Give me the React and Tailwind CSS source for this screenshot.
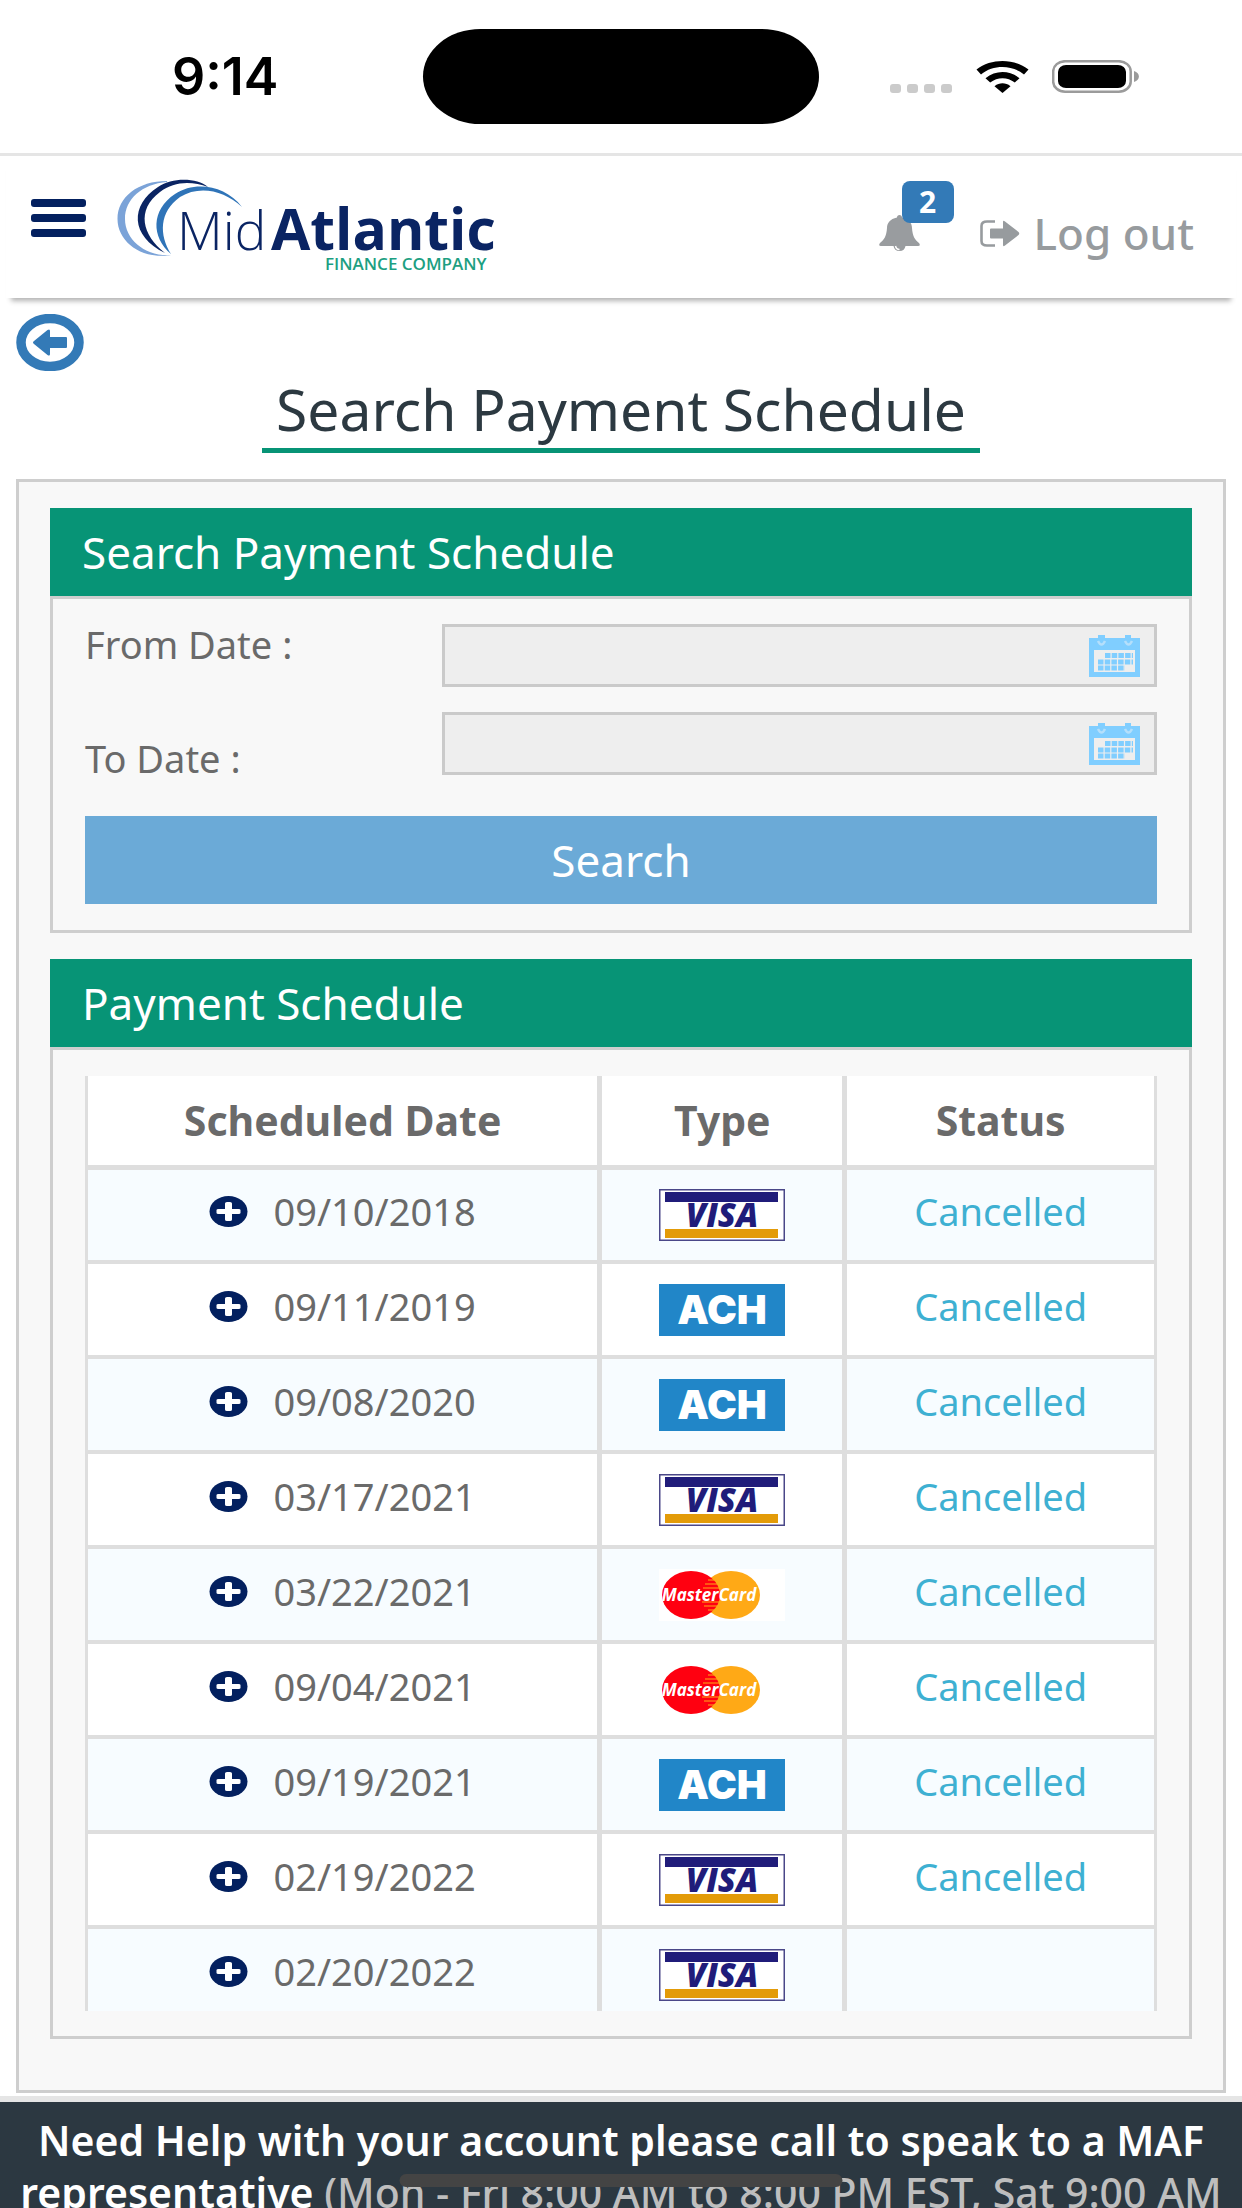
import React, { useState } from 'react';

const payments = [
  { date: '09/10/2018', type: 'visa', status: 'Cancelled' },
  { date: '09/11/2019', type: 'ach', status: 'Cancelled' },
  { date: '09/08/2020', type: 'ach', status: 'Cancelled' },
  { date: '03/17/2021', type: 'visa', status: 'Cancelled' },
  { date: '03/22/2021', type: 'mastercard', status: 'Cancelled' },
  { date: '09/04/2021', type: 'mastercard', status: 'Cancelled' },
  { date: '09/19/2021', type: 'ach', status: 'Cancelled' },
  { date: '02/19/2022', type: 'visa', status: 'Cancelled' },
  { date: '02/20/2022', type: 'visa', status: '' },
];

const StatusBar = () => (
  <div className="relative flex h-[156px] shrink-0 items-center justify-between border-b-3 border-[#e5e5e5] pt-1 pb-1 pl-[172px] pr-[103px]">
    <span className="font-['Inter'] text-[52px] leading-none font-semibold text-black">9:14</span>
    <div className="absolute top-[29px] left-1/2 h-[95px] w-[396px] -translate-x-1/2 rounded-[58px/48px] bg-black" />
    <div className="flex items-center">
      <div className="mt-6 flex gap-[6px]">
        {[0, 1, 2, 3].map((dot) => (
          <span key={dot} className="h-[9px] w-[11px] rounded-[3px] bg-[#cbcbcb]" />
        ))}
      </div>
      <svg className="ml-6 h-8 w-[53px]" viewBox="0 0 53 32" aria-hidden="true">
        <path d="M0.5 8.5C15-2.8 38-2.8 52.5 8.5L48 13.4C36 3.6 17 3.6 5 13.4Z" />
        <path d="M9.5 17.2C19.5 9 33.5 9 43.5 17.2L38.8 21.6C31.5 15.8 21.5 15.8 14.2 21.6Z" />
        <path d="M18.5 25.2C23.5 21.4 29.5 21.4 34.5 25.2L26.5 32Z" />
      </svg>
      <svg className="ml-[23px] h-[33px] w-[87px]" viewBox="0 0 87 33" aria-hidden="true">
        <rect x="1.2" y="1.2" width="77.5" height="30.5" rx="12" ry="10" fill="none" stroke="#9b9b9b" strokeWidth="2.5" />
        <rect x="6" y="5" width="68" height="23" rx="8" ry="7" />
        <path d="M82 11C88.5 13 88.5 20 82 22Z" fill="#9b9b9b" />
      </svg>
    </div>
  </div>
);

const Logo = () => (
  <svg className="ml-[31px] h-[92px] w-[380px] overflow-visible" viewBox="0 0 380 92" role="img" aria-label="MidAtlantic Finance Company">
    <path d="M50 2C21 2 0.5 18 0.5 40C0.5 63 25 81 54 76C29 78 8 61 8 40C8 20 25 5 50 3Z" fill="#7ba3d8" />
    <path d="M91 8C80-1 56-2 41 8C13 26 13 57 48 74C25 56 19 31 43 13C57 2 75 2 91 8Z" fill="#0a2463" />
    <path d="M125 28C108 6 78 2 58 15C34 31 34 58 54 75C42 56 42 33 63 18C82 6 107 11 125 28Z" fill="#2f74b8" />
    <g fontFamily="Open Sans, sans-serif" fill="#0a2463">
      <text x="60" y="71" fontSize="53" fontWeight="300">Mid</text>
      <text x="154" y="71" fontSize="57" fontWeight="700">Atlantic</text>
      <text x="208" y="91" fontSize="17" fontWeight="600" fill="#1d9f82">FINANCE COMPANY</text>
    </g>
  </svg>
);

const Header = () => (
  <header className="mx-[6px] flex h-[142px] shrink-0 items-start pl-[25px] shadow-[0_8px_5px_-5px_rgba(0,0,0,0.3)]">
    <button type="button" aria-label="Menu" className="mt-[43px] flex w-[55px] flex-col gap-[7px]">
      <span className="h-2 w-full rounded-[3px] bg-[#03205f]" />
      <span className="h-2 w-full rounded-[3px] bg-[#03205f]" />
      <span className="h-2 w-full rounded-[3px] bg-[#03205f]" />
    </button>
    <div className="mt-[23px]">
      <Logo />
    </div>
    <div className="mt-[25px] mr-[42px] ml-auto flex items-end">
      <button type="button" aria-label="Notifications" className="relative h-[70px] w-[75px]">
        <svg className="absolute bottom-0 left-0 h-[36px] w-[41px]" viewBox="0 0 41 36" aria-hidden="true">
          <path d="M20.5 0C22 0 23 1 23 2.5C30 4 33 8 33 13C33.5 21 36 25 40 28Q42 31 39 31H26.5C26 34 24 36 20.5 36S15 34 14.5 31H2Q-1 31 1 28C5 25 7.5 21 8 13C8 8 11 4 18 2.5C18 1 19 0 20.5 0Z" fill="#999c9f" />
          <path d="M16.5 31C17 33.5 18.5 34.5 20.5 34.5" fill="none" stroke="#fff" strokeWidth="1.5" />
        </svg>
        <span className="absolute top-0 right-0 flex h-[42px] w-[52px] items-center justify-center rounded-lg bg-[#337ab7] text-[30px] leading-none font-bold text-white">
          2
        </span>
      </button>
      <a href="#logout" className="ml-[26px] flex items-center text-[44px] leading-[36px] font-medium text-[#979b9e]">
        <svg className="mr-[14px] h-[27px] w-[40px]" viewBox="0 0 40 27" aria-hidden="true">
          <path d="M15 1.5H7Q1.5 1.5 1.5 6V21Q1.5 25.5 7 25.5H15" fill="none" stroke="#979b9e" strokeWidth="2.6" />
          <path d="M11 8.5H23V2Q23 0 25 1.5L38.5 12Q40 13.5 38.5 15L25 25.5Q23 27 23 25V18.5H11Q10 18.5 10 17.5V9.5Q10 8.5 11 8.5Z" fill="#979b9e" />
        </svg>
        Log out
      </a>
    </div>
  </header>
);

const CalendarIcon = () => (
  <svg className="h-[42px] w-[51px]" viewBox="0 0 51 42" aria-hidden="true">
    <path d="M0 3H9V0H16V3H36V0H42V3H51V42H0Z" fill="#80ceff" />
    <path d="M5 15H46V37H5Z" fill="#eeeeee" />
    <path d="M9 6Q12.500 13 16 6M36 6Q39.500 13 43 6" fill="none" stroke="#b5dffb" strokeWidth="2.5" />
    <path d="M16 20.500H44M9 27H44M9 33H36" stroke="#80ceff" strokeWidth="5" strokeDasharray="5.500 1.200" />
  </svg>
);

const DateField = ({ id, value, onChange }) => (
  <div className="relative">
    <input
      id={id}
      type="text"
      value={value}
      onChange={onChange}
      className="block h-[63px] w-full border-3 border-[#cacaca] bg-[#eeeeee] px-4 pr-[80px] text-[32px] text-[#666] outline-none"
    />
    <span className="pointer-events-none absolute top-[11px] right-[17px]">
      <CalendarIcon />
    </span>
  </div>
);

const CardType = ({ type }) => {
  if (type === 'visa') {
    return (
      <svg className="mx-auto block h-[52px] w-[126px]" viewBox="0 0 126 52" role="img" aria-label="Visa">
        <rect x="0.75" y="0.75" width="124.5" height="50.5" fill="#fff" stroke="#4a4788" strokeWidth="1.5" />
        <rect x="6" y="3" width="113" height="10" fill="#201c7a" />
        <rect x="6" y="40" width="113" height="9" fill="#e39b08" />
        <text x="63" y="38" textAnchor="middle" fontFamily="Open Sans, sans-serif" fontSize="33" fontWeight="800" fontStyle="italic" fill="#201c7a">VISA</text>
      </svg>
    );
  }
  if (type === 'ach') {
    return (
      <svg className="mx-auto block h-[52px] w-[126px]" viewBox="0 0 126 52" role="img" aria-label="ACH">
        <rect width="126" height="52" fill="#2186c8" />
        <text x="63" y="40" textAnchor="middle" fontFamily="Inter, sans-serif" fontSize="40" fontWeight="900" fill="#fff">ACH</text>
      </svg>
    );
  }
  return (
    <svg className="mx-auto block h-[52px] w-[126px]" viewBox="0 0 126 52" role="img" aria-label="MasterCard">
      <rect width="126" height="52" fill="#fff" />
      <ellipse cx="72" cy="26" rx="29" ry="24" fill="#ffa916" />
      <ellipse cx="32" cy="26" rx="29" ry="24" fill="#ff0010" />
      <path d="M49 11H55M46 15H58M44 19H60M43 33H60M45 37H58M49 41H55" stroke="#ffa916" strokeWidth="1.2" />
      <text x="50" y="32" textAnchor="middle" fontFamily="Open Sans, sans-serif" fontSize="17" fontWeight="700" fontStyle="italic" fill="#fff">MasterCard</text>
    </svg>
  );
};

const PaymentRow = ({ payment }) => (
  <tr className="h-[95px] border-b-4 border-[#dedede] odd:bg-[#f7fcff]">
    <td className="border-r-5 border-[#dedede] pb-[7px]">
      <div className="flex items-center justify-center pr-px">
        <button type="button" aria-label={`Show details for ${payment.date}`} className="mr-[26px]">
          <svg className="block h-[31px] w-[39px]" viewBox="0 0 39 31" aria-hidden="true">
            <ellipse cx="19.5" cy="15.5" rx="19" ry="15.5" fill="#03205f" />
            <path d="M9.5 13H16V7.5Q16 6 18 6H21Q23 6 23 7.5V13H29.5Q31.5 13 31.5 14V17Q31.5 18 29.5 18H23V23.5Q23 25 21 25H18Q16 25 16 23.5V18H9.5Q7.5 18 7.5 17V14Q7.5 13 9.5 13Z" fill="#fff" />
          </svg>
        </button>
        {payment.date}
      </div>
    </td>
    <td className="border-r-5 border-[#dedede]">
      <CardType type={payment.type} />
    </td>
    <td className="pb-[7px] text-center text-[#3eb0d2]">{payment.status}</td>
  </tr>
);

const App = () => {
  const [fromDate, setFromDate] = useState('');
  const [toDate, setToDate] = useState('');

  return (
    <div className="relative flex h-screen flex-col overflow-hidden bg-white font-['Noto_Sans','Open_Sans',sans-serif] text-[38px] text-[#6a6a6a]">
      <StatusBar />
      <Header />

      <main className="flex min-h-0 flex-1 flex-col px-4 pt-4 pb-[3px]">
        <a href="#back" aria-label="Back" className="self-start">
          <svg className="block h-[57px] w-[68px]" viewBox="0 0 68 57" aria-hidden="true">
            <ellipse cx="34" cy="28.5" rx="29" ry="24" fill="none" stroke="#337ab7" strokeWidth="9.5" />
            <path d="M51 24V33Q51 34 50 34H34V40Q34 42.5 31.5 41L18 30Q16 28.5 18 27L31.5 16Q34 14.5 34 17V23H50Q51 23 51 24Z" fill="#337ab7" />
          </svg>
        </a>
        <h1 className="self-center border-b-5 border-[#079476] px-[14px] pt-1 pb-[5px] text-[57px] leading-[68px] text-[#2c3941]">
          Search Payment Schedule
        </h1>

        <div className="mt-[26px] flex min-h-0 flex-1 flex-col border-3 border-[#cecece] bg-[#f8f8f8] px-[31px] pt-[26px] pb-[51px]">
          <section>
            <h2 className="bg-[#079476] px-8 text-[44px] leading-[88px] text-white">Search Payment Schedule</h2>
            <form
              onSubmit={(e) => e.preventDefault()}
              className="border-3 border-[#cecece] px-8 pt-[25px] pb-[26px]"
            >
              <div className="grid grid-cols-3 gap-y-[25px]">
                <label htmlFor="fromDate" className="leading-10">From Date :</label>
                <div className="col-span-2">
                  <DateField id="fromDate" value={fromDate} onChange={(e) => setFromDate(e.target.value)} />
                </div>
                <label htmlFor="toDate" className="pt-[26px] leading-10">To Date :</label>
                <div className="col-span-2">
                  <DateField id="toDate" value={toDate} onChange={(e) => setToDate(e.target.value)} />
                </div>
              </div>
              <button type="submit" className="mt-[38px] block w-full bg-[#6baad7] text-[44px] leading-[88px] text-white">
                Search
              </button>
            </form>
          </section>

          <section className="mt-[26px] flex min-h-0 flex-1 flex-col">
            <h2 className="bg-[#079476] px-8 text-[44px] leading-[88px] text-white">Payment Schedule</h2>
            <div className="flex min-h-0 flex-1 flex-col border-3 border-[#cecece] px-8 pt-[26px] pb-[25px]">
              <div className="min-h-0 flex-1 overflow-y-auto border-x-3 border-[#dedede] [scrollbar-width:none]">
                <table className="w-full table-fixed border-collapse bg-white">
                  <colgroup>
                    <col className="w-[48%]" />
                    <col className="w-[23%]" />
                    <col className="w-[29%]" />
                  </colgroup>
                  <thead>
                    <tr className="h-[91px] border-b-5 border-[#dedede] text-[41px]">
                      <th className="border-r-5 border-[#dedede]">Scheduled Date</th>
                      <th className="border-r-5 border-[#dedede]">Type</th>
                      <th>Status</th>
                    </tr>
                  </thead>
                  <tbody>
                    {payments.map((payment) => (
                      <PaymentRow key={payment.date} payment={payment} />
                    ))}
                  </tbody>
                </table>
              </div>
            </div>
          </section>
        </div>
      </main>

      <footer className="h-[112px] shrink-0 border-t-6 border-[#e5e5e5] bg-[#2c3841] pt-[12px] text-center text-[41px] leading-[52px] font-semibold text-white">
        <span className="block whitespace-nowrap">Need Help with your account please call to speak to a MAF</span>
        <span className="block whitespace-nowrap">
          representative <span className="font-medium text-[#bebebe]">(Mon - Fri 8:00 AM to 8:00 PM EST, Sat 9:00 AM</span>
        </span>
      </footer>
      <div className="absolute bottom-[21px] left-1/2 h-[13px] w-[443px] -translate-x-1/2 rounded-full bg-[#444]" />
    </div>
  );
};

export default App;
